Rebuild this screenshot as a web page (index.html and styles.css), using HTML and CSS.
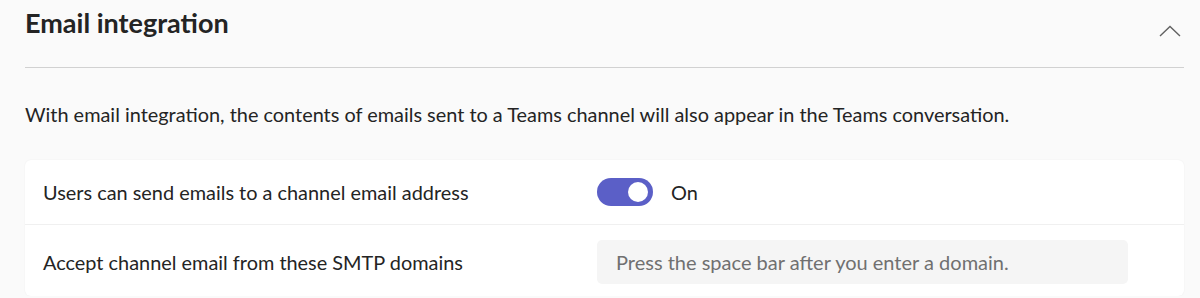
FILE: index.html
```html
<!DOCTYPE html>
<html lang="en">

<head>
    <meta charset="UTF-8">
    <meta name="viewport" content="width=device-width, initial-scale=1.0">
    <title>Email integration</title>
    <link rel="stylesheet" href="styles.css">
</head>

<body>
    <div class="section">
        <div class="section-header">
            <h2>Email integration</h2>
            <button class="collapse" aria-label="Collapse">
                <svg width="22" height="12" viewBox="0 0 22 12">
                    <path d="M1 11 L11 1.5 L21 11" fill="none" stroke="#616161" stroke-width="1.4"/>
                </svg>
            </button>
        </div>

        <p class="description">With email integration, the contents of emails sent to a Teams channel will also appear in the Teams conversation.</p>

        <div class="card">
            <div class="setting-row">
                <div class="setting-label">Users can send emails to a channel email address</div>
                <div class="setting-control">
                    <span class="toggle on"><span class="knob"></span></span>
                    <span class="toggle-text">On</span>
                </div>
            </div>
            <div class="setting-row input-row">
                <div class="setting-label">Accept channel email from these SMTP domains</div>
                <div class="setting-control">
                    <input type="text" class="domain-input" placeholder="Press the space bar after you enter a domain.">
                </div>
            </div>
        </div>
    </div>
</body>

</html>
```

FILE: styles.css
```css
* {
    margin: 0;
    padding: 0;
    box-sizing: border-box;
    font-family: Lato, 'Noto Sans', sans-serif;
}

body {
    background: #fafafa;
    color: #242424;
    overflow: hidden;
}

.section {
    padding: 0 16px 0 25px;
}

.section-header {
    display: flex;
    justify-content: space-between;
    height: 68px;
    border-bottom: 1px solid #d1d1d1;
}

.section-header h2 {
    font-size: 27px;
    font-weight: 700;
    line-height: 36px;
    padding-top: 5px;
}

.collapse {
    background: none;
    border: none;
    padding: 24px 3px 0 0;
    height: 40px;
    cursor: pointer;
}

.description {
    font-size: 19.9px;
    line-height: 28px;
    padding: 32px 0 0 0;
    height: 92px;
}

.card {
    background: #ffffff;
    border-radius: 6px;
    box-shadow: 0 0 2px rgba(0, 0, 0, 0.06);
}

.setting-row {
    display: grid;
    grid-template-columns: 554px 1fr;
    align-items: center;
    padding: 0 18px;
    height: 65px;
    border-bottom: 1px solid #f0f0f0;
}

.setting-row.input-row {
    height: 71px;
    border-bottom: none;
    padding-top: 2px;
}

.setting-label {
    font-size: 19.9px;
}

.setting-control {
    display: flex;
    align-items: center;
    gap: 18px;
}

.toggle {
    width: 56px;
    height: 28px;
    border-radius: 14px;
    background: #5b5fc7;
    display: flex;
    align-items: center;
    justify-content: flex-end;
    padding-right: 5px;
}

.knob {
    width: 20px;
    height: 20px;
    border-radius: 50%;
    background: #ffffff;
}

.toggle-text {
    font-size: 19.9px;
}

.domain-input {
    width: 531px;
    height: 44px;
    background: #f5f5f5;
    border: none;
    border-radius: 5px;
    padding: 0 19px;
    font-size: 20px;
    color: #242424;
}

.domain-input::placeholder {
    color: #707070;
}

.domain-input:focus {
    outline: none;
}
```
